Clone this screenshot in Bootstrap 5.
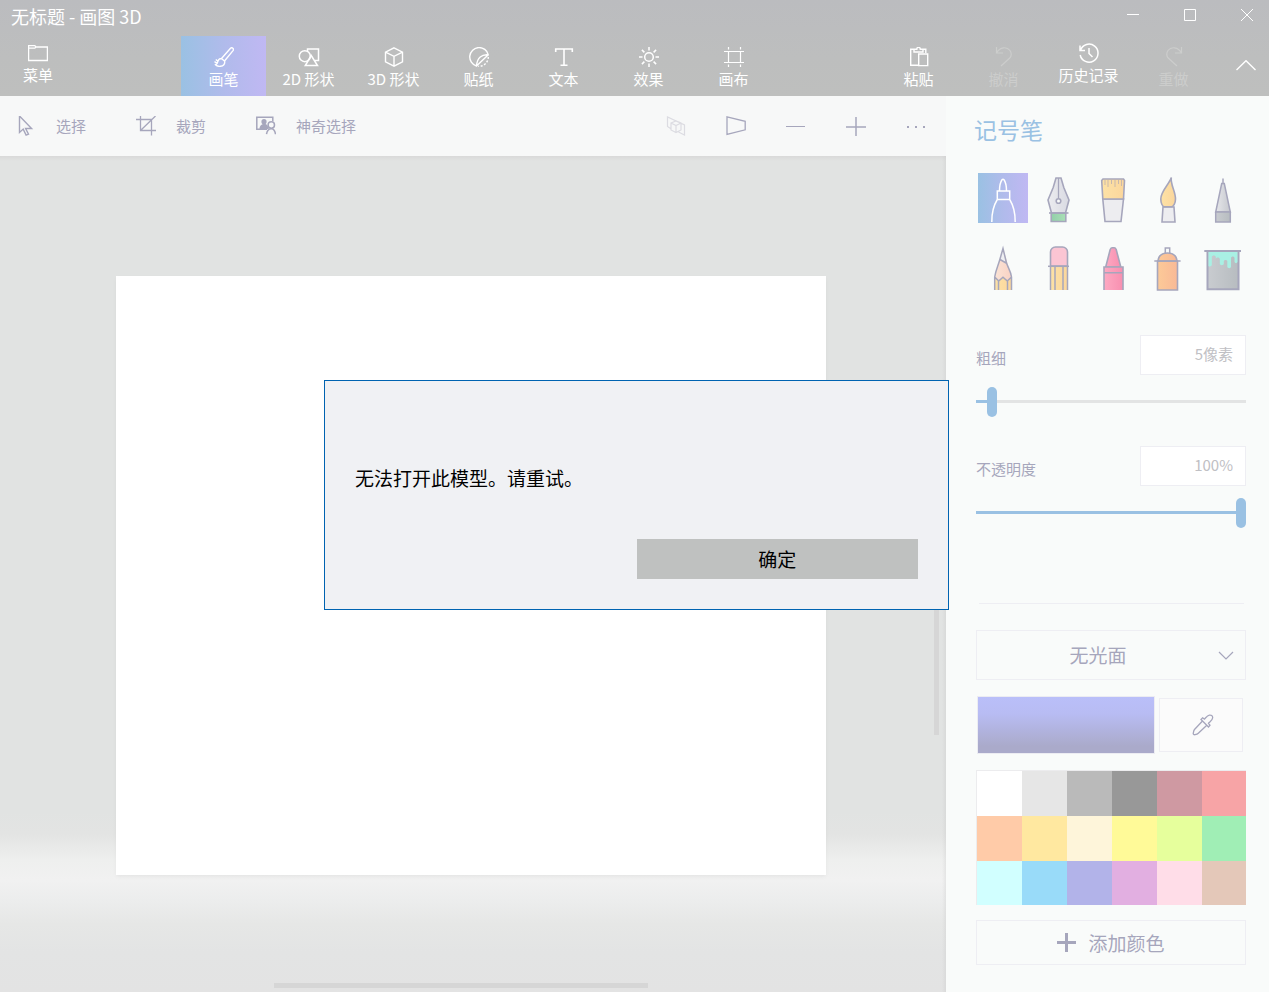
<!DOCTYPE html>
<html lang="zh-CN">
<head>
<meta charset="utf-8">
<meta name="viewport" content="width=device-width, initial-scale=1">
<title>无标题 - 画图 3D</title>
<link href="https://cdn.jsdelivr.net/npm/bootstrap@5.3.0/dist/css/bootstrap.min.css" rel="stylesheet">
<style>
:root { --ink: #a6a6bc; --sky: #9ac1e3; --line: #eeeef3; --pane: #f9fbfa; }
body { font-family: "Noto Sans CJK SC", "Noto Sans", sans-serif; font-size: 15px; line-height: 22px; color: var(--ink); background: var(--pane); }
button, select, input { font-family: inherit; }
svg { display: block; }
svg:not([fill]) { fill: none; }
.plain { border: 0; background: none; padding: 0; color: inherit; }
.app-head { background: linear-gradient(#bbbcbf, #bdbebe 60%, #bebfbe); color: #fff; }
.title-row { height: 36px; }
.app-title { font-size: 18px; line-height: 32px; padding-left: 11px; font-weight: 400; }
.win-btns { gap: 13px; }
.win-btns button { width: 44px; height: 30px; }
.ribbon { height: 60px; }
.ribbon-btn { width: 85px; height: 60px; padding-top: 11px; gap: 1px; white-space: nowrap; }
.ribbon-btn.raised { padding-top: 7px; }
.menu-btn { width: 76px; margin-right: 105px; }
.fold-btn { width: 53px; padding-right: 13px; }
.ribbon-btn:disabled { color: #cccdcc; }
.on { background: linear-gradient(90deg, #9ac1e3, #b0bbeb 50%, #c0b8f3); color: #fff; }
.tool-row { height: 60px; background: #f7f8f8; }
.tool-row .pick { padding: 0 16px; gap: 20px; height: 60px; }
.tool-row .picks { gap: 18px; }
.tool-row .view { width: 60px; height: 60px; }
.view:disabled { color: #dcdce2; }
.stage { padding: 120px 120px 117px 116px;
  background: linear-gradient(90deg, transparent calc(100% - 4px), rgba(190,190,190,.25)),
   linear-gradient(#d9d9d9, transparent 5px),
   linear-gradient(0deg, #e3e3e3, #e3e4e4 40px, #e6e7e6 68px, #eceded 92px, #f1f1f1 112px, #eeefee 132px, #e3e4e3 158px, #e1e3e2 180px); }
.sheet { background: #fff; box-shadow: 0 2px 4px -1px rgba(120,120,120,.12); }
.bar-h, .bar-v { position: absolute; background: #d6d6d6; }
.bar-h { left: 29%; width: 39.5%; height: 5px; bottom: 4px; }
.bar-v { right: 7px; width: 5px; top: 30%; bottom: 257px; }
.side { width: 323px; padding: 15px 23px 27px 30px; background: var(--pane); }
.side h2 { font-size: 23px; line-height: 36px; color: var(--sky); margin: 0 0 26px -2px; font-weight: 400; }
.brushes { display: grid; grid-template-columns: repeat(5, 50px); gap: 18px 5px; margin: 0 -4px 44px 2px; }
.brushes button { width: 50px; height: 50px; }
.brushes svg { stroke: var(--ink); stroke-width: 2; }
.brushes .on svg { stroke: #fff; }
.amount { width: 106px; height: 40px; border: 1px solid var(--line); background: #fff; text-align: right; padding: 0 12px 3px; color: #c0c0c4; border-radius: 0; }
.field-name { margin-bottom: 6px; }
.dial { appearance: none; display: block; width: 100%; height: 30px; margin: 12px 0 29px; background: linear-gradient(90deg, var(--sky) var(--fill), #e3e4e4 var(--fill)) 0 13px / 100% 3px no-repeat; }
.dial::-webkit-slider-thumb { appearance: none; width: 10px; height: 30px; border-radius: 5px; background: var(--sky); }
.dial::-moz-range-thumb { border: 0; width: 10px; height: 30px; border-radius: 5px; background: var(--sky); }
.rule { height: 1px; background: var(--line); margin: 75px 2px 26px 3px; }
.finish { height: 50px; width: 100%; border: 1px solid var(--line); border-radius: 0; font-size: 19px; color: var(--ink); text-align-last: center; appearance: none; padding: 0 26px 0 0;
  background: url("data:image/svg+xml,%3Csvg xmlns='http://www.w3.org/2000/svg' width='16' height='12' fill='none' stroke='%23a6a6bc' stroke-width='1.2'%3E%3Cpath d='M1 3l7 7 7-7'/%3E%3C/svg%3E") right 11px center no-repeat; }
.current { margin: 16px 3px 16px 1px; gap: 4px; }
.current-color { height: 58px; border: 1px solid #ececf2; background: linear-gradient(#babff9, #b8bcf3 30%, #aaaaca 88%); }
.dropper { width: 84px; height: 54px; border: 1px solid var(--line); background: #fbfbfb; }
.palette { display: grid; grid-template-columns: repeat(5, 45px) 1fr; border: solid #ececee; border-width: 1px 0 0 1px; }
.palette button { height: 45px; }
.palette button:nth-child(n+13) { height: 44px; }
.add-color { height: 45px; border: 1px solid var(--line); margin-top: 15px; font-size: 19px; gap: 12px; }
.veil { position: fixed; inset: 0; z-index: 10; padding: 0 0 2px 4px; }
.notice { width: 625px; border: 1px solid #0063b1; background: #f0f1f4; color: #000; padding: 83px 30px 30px; font-size: 19px; }
.notice p { line-height: 28px; margin: 0 0 47px; }
.notice button { width: 50%; height: 40px; background: #bfc1c0; }
</style>
</head>
<body>
<div class="d-flex flex-column min-vh-100">
<header class="app-head">
  <div class="title-row d-flex justify-content-between">
    <h1 class="app-title m-0">无标题 - 画图 3D</h1>
    <div class="win-btns d-flex">
      <button class="plain d-flex align-items-center justify-content-center" aria-label="最小化"><svg width="12" height="12" stroke="currentColor"><path d="M0 5.5h12"/></svg></button>
      <button class="plain d-flex align-items-center justify-content-center" aria-label="最大化"><svg width="12" height="12" stroke="currentColor"><path d="M.5.5h11v11H.5z"/></svg></button>
      <button class="plain d-flex align-items-center justify-content-center" aria-label="关闭"><svg width="12" height="12" stroke="currentColor"><path d="M0 0l12 12M12 0L0 12"/></svg></button>
    </div>
  </div>
  <nav class="ribbon d-flex" aria-label="主菜单">
    <button class="plain ribbon-btn raised menu-btn d-flex flex-column align-items-center"><svg width="20" height="20" stroke="currentColor" stroke-width="1.3"><path d="M.6 2.6h6.2l1.2 1.4h11.400v13.500H.6zM.6 5.200h6.200L8 4"/></svg><span>菜单</span></button>
    <div class="d-flex">
      <button class="plain ribbon-btn on d-flex flex-column align-items-center"><svg width="20" height="20" stroke="currentColor" stroke-width="1.4"><path d="M7.500 11.500L16.500 1.300c1.600-1.500 3.800.5 2.500 2.300L10.500 14M7.500 11.500l3.200 2.800M7.500 11.500c-2 .1-3.200 1-3.500 2.700-.3 2-1.200 2.800-2.500 3.500 1.200 1.300 3 1.800 5 1.600 3-.3 4.500-2.200 4.200-5M3.500 16.500L.5 14.700M3.800 14.300l-2-1.800"/></svg><span>画笔</span></button>
      <button class="plain ribbon-btn d-flex flex-column align-items-center"><svg width="22" height="20" stroke="currentColor" stroke-width="1.5"><path d="M9.500 5V2h11v11.500h-3.500"/><circle cx="6.800" cy="9.200" r="5.500"/><path d="M13.200 8.500L19.500 18.500H7.300z"/></svg><span>2D 形状</span></button>
      <button class="plain ribbon-btn d-flex flex-column align-items-center"><svg width="20" height="20" stroke="currentColor" stroke-width="1.4"><path d="M10 .9l8.500 4.200v9.800L10 19.100l-8.500-4.200V5.100zM1.500 5.100L10 9.300l8.500-4.200M10 9.300v9.800"/></svg><span>3D 形状</span></button>
      <button class="plain ribbon-btn d-flex flex-column align-items-center"><svg width="20" height="20" stroke="currentColor" stroke-width="1.4"><path d="M7.500 19A9.400 9.400 0 1 1 19.300 7.800C13 7 8 11 7.500 19zM19.300 7.800L7.500 19"/><path d="M19.300 10a9.400 9.400 0 0 1-10 9.300" stroke-dasharray="2 1.600"/></svg><span>贴纸</span></button>
      <button class="plain ribbon-btn d-flex flex-column align-items-center"><svg width="20" height="20" stroke="currentColor" stroke-width="1.6"><path d="M1.700 5V2h16.600v3M10 2v16.300M6.500 18.300h7"/></svg><span>文本</span></button>
      <button class="plain ribbon-btn d-flex flex-column align-items-center"><svg width="20" height="20" stroke="currentColor" stroke-width="1.5"><circle cx="10" cy="10" r="4.300"/><path d="M10 0v3.500M10 16.500V20M0 10h3.500M16.500 10H20M2.900 2.900l2.500 2.500M14.600 14.600l2.500 2.500M17.100 2.900l-2.500 2.500M5.400 14.600l-2.500 2.500"/></svg><span>效果</span></button>
      <button class="plain ribbon-btn d-flex flex-column align-items-center"><svg width="20" height="20" stroke="currentColor" stroke-width="1.2"><path d="M4.500 0v2.500M4.500 4v12M4.500 17.500V20M16.500 0v2.500M16.500 4v12M16.500 17.500V20M0 4.500h20M0 15.500h20"/></svg><span>画布</span></button>
    </div>
    <div class="d-flex ms-auto">
      <button class="plain ribbon-btn d-flex flex-column align-items-center"><svg width="20" height="20" stroke="currentColor" stroke-width="1.4"><path d="M9 18.300H1.700V2.200h3.800M13 2.200h3.800V6M5 5V2.200h2.800c0-2.400 3.500-2.400 3.500 0H14V5z"/><path d="M9.700 7h9v11.600h-9z"/></svg><span>粘贴</span></button>
      <button class="plain ribbon-btn d-flex flex-column align-items-center" disabled><svg width="20" height="20" stroke="currentColor" stroke-width="1.2"><path d="M2.500 0v6H9M2.500 6C6-.5 13-.5 16 3.500c2 3 1.500 5.500-.5 7.800L7 19"/></svg><span>撤消</span></button>
      <button class="plain ribbon-btn raised d-flex flex-column align-items-center"><svg width="20" height="20" stroke="currentColor" stroke-width="1.5"><path d="M1 2.500v5h5M1.500 7.200A9 9 0 1 1 1.200 12M10 5v5.500l3.500 3.500"/></svg><span>历史记录</span></button>
      <button class="plain ribbon-btn d-flex flex-column align-items-center" disabled><svg width="20" height="20" stroke="currentColor" stroke-width="1.2"><path d="M17.500 0v6H11M17.500 6C14-.5 7-.5 4 3.500c-2 3-1.500 5.500.5 7.800L13 19"/></svg><span>重做</span></button>
      <button class="plain fold-btn d-flex align-items-center justify-content-end" aria-label="折叠"><svg width="20" height="12" stroke="currentColor" stroke-width="1.4"><path d="M.5 10L10 .7l9.500 9.300"/></svg></button>
    </div>
  </nav>
</header>
<div class="d-flex flex-grow-1">
  <main class="d-flex flex-column flex-grow-1">
    <div class="tool-row d-flex justify-content-between">
      <div class="picks d-flex">
        <button class="plain pick d-flex align-items-center"><svg width="20" height="20" stroke="currentColor" stroke-width="1.4"><path d="M3.500 0v16.500l3.700-3.400 2.900 6 2.400-1-2.900-5.600h6z"/></svg><span>选择</span></button>
        <button class="plain pick d-flex align-items-center"><svg width="20" height="20" stroke="currentColor" stroke-width="1.3"><path d="M0 3.500h15.500V19.500M4.500 0v14.500H20M4.500 14.500L19.500 0"/></svg><span>裁剪</span></button>
        <button class="plain pick d-flex align-items-center"><svg width="20" height="20" stroke="currentColor" stroke-width="1.5"><path d="M11 13.300H.8V1.200h16v4"/><circle cx="8" cy="5.700" r="2.600" fill="currentColor" stroke="none"/><path d="M3.500 13c0-3.500 2-5 5-5 1.500 0 2.500.5 3 1.500L13 13z" fill="currentColor" stroke="none"/><circle cx="15.300" cy="9" r="3.200"/><path d="M10.500 18.200c.5-3.500 2-5.500 4.800-5.500s3.700 2 4.200 5.500"/></svg><span>神奇选择</span></button>
      </div>
      <div class="d-flex">
        <button class="plain view d-flex align-items-center justify-content-center" disabled aria-label="混合视图"><svg width="20" height="20" stroke="currentColor" stroke-width="1.2"><path d="M4.500 12.500L1.500 10.500V1l17 8v10l-6-3M5 7l5-2 5 2v7l-5 2.500L5 14zM5 7l5 2.500L15 7M10 9.500v7"/></svg></button>
        <button class="plain view d-flex align-items-center justify-content-center" aria-label="三维视图"><svg width="20" height="20" stroke="currentColor" stroke-width="1.3"><path d="M1 .8l18.200 4.500v8.500L1 18.500z"/></svg></button>
        <button class="plain view d-flex align-items-center justify-content-center" aria-label="缩小"><svg width="20" height="20" stroke="currentColor"><path d="M0 10.500h19"/></svg></button>
        <button class="plain view d-flex align-items-center justify-content-center" aria-label="放大"><svg width="20" height="20" stroke="currentColor" stroke-width="1.500"><path d="M0 11h20M10 1v19"/></svg></button>
        <button class="plain view d-flex align-items-center justify-content-center" aria-label="更多"><svg width="20" height="20" fill="currentColor"><path d="M1 10h2v2H1zM9 10h2v2H9zM17 10h2v2h-2z"/></svg></button>
      </div>
    </div>
    <div class="stage position-relative d-flex flex-grow-1">
      <div class="sheet flex-grow-1"></div>
      <div class="bar-v"></div>
      <div class="bar-h"></div>
    </div>
  </main>
  <aside class="side flex-shrink-0">
    <h2>记号笔</h2>
    <svg width="0" height="0" class="position-absolute" aria-hidden="true"><defs>
      <linearGradient id="steel"><stop stop-color="#ececf0"/><stop offset="1" stop-color="#d9dae2"/></linearGradient>
      <linearGradient id="grey"><stop stop-color="#c9ccd0"/><stop offset="1" stop-color="#b7bcc0"/></linearGradient>
      <linearGradient id="cone"><stop stop-color="#e6e7ea"/><stop offset="1" stop-color="#c6c8ce"/></linearGradient>
      <linearGradient id="gold"><stop stop-color="#fde2a6"/><stop offset="1" stop-color="#fbd69c"/></linearGradient>
      <linearGradient id="green"><stop stop-color="#93cfaa"/><stop offset="1" stop-color="#a9dfb5"/></linearGradient>
      <linearGradient id="skin"><stop stop-color="#fbe4d6"/><stop offset="1" stop-color="#f8d2c4"/></linearGradient>
      <linearGradient id="rose"><stop stop-color="#fda9c2"/><stop offset="1" stop-color="#f88fb0"/></linearGradient>
      <linearGradient id="rust"><stop stop-color="#fcca98"/><stop offset="1" stop-color="#f9b996"/></linearGradient>
    </defs></svg>
    <div class="brushes">
      <button class="plain on" aria-label="记号笔"><svg width="50" height="50"><path stroke-width="1.5" d="M21.500 18c0-5 1.300-9.500 2.500-11.200q1-1 2 0c1.200 1.700 2.500 6.200 2.500 11.200M19.300 18h12.400v8.500H19.300zM13.800 49c-.1-9 1.500-16 5.500-22.500M37.200 49c.1-9-1.500-16-5.500-22.500"/></svg></button>
      <button class="plain" aria-label="书法笔"><svg width="50" height="50"><path fill="url(#green)" stroke-width="1.6" d="M18.200 40h14.600v8.500H18.200z"/><path fill="url(#steel)" stroke-width="1.6" d="M23 5h5l2.800 9.500 5.200 12.500-3.500 13h-14l-3.500-13 5.200-12.500z"/><path stroke-width="1.6" d="M16 40h19.500"/><path stroke-width="1.3" d="M25.500 5v20"/><circle cx="25.500" cy="28" r="2.300" fill="#f9fbfa" stroke-width="1.600"/></svg></button>
      <button class="plain" aria-label="油画笔"><svg width="50" height="50"><path fill="#ededf0" stroke-width="1.6" d="M14.800 26h20.700l-2.500 22.500H17z"/><path fill="url(#gold)" stroke-width="1.6" d="M15 6h20.500l1 1.500-1 18.500H14.800L13.700 7.500z"/><path stroke-width="1" stroke="#c9b8ac" d="M17 7v5M20 7v7M23.500 7v4M27 7v7M30.500 7v4M33.500 7v6"/></svg></button>
      <button class="plain" aria-label="水彩"><svg width="50" height="50"><path fill="#ededf0" stroke-width="1.6" d="M20 34h11l1 15H19z"/><path fill="url(#gold)" stroke-width="1.6" d="M28.300 4.500c-1 7.500 4.200 13.500 4.200 21.500 0 4-2 7.800-4 7.800h-7c-2 0-3.700-3.500-3.700-7.800 0-8 8-14 10.500-21.500z"/></svg></button>
      <button class="plain" aria-label="像素笔"><svg width="50" height="50"><path stroke-width="1.5" d="M25 5.500V11"/><path fill="url(#cone)" stroke-width="1.5" d="M23.700 10.500h2.600L32.300 39H17.700z"/><path fill="url(#grey)" stroke-width="1.5" d="M17.700 39h14.600v10H17.700z"/></svg></button>
      <button class="plain" aria-label="铅笔"><svg width="50" height="50"><path fill="url(#skin)" stroke="none" d="M25 7l-8.500 29v4h17v-4z"/><path fill="#f0f0f3" stroke="none" d="M25 7l-3.500 11.500 7 4z"/><path fill="url(#gold)" stroke="none" d="M16.700 36l4 4 4.300-4 4.300 4 4.200-4v13H16.700z"/><path stroke-width="1.5" d="M16.700 49V36c1-7 3.300-11 5-17L25 7.500 28.500 22c1.700 5 4.200 8 5 14v13M22 18.500l7 4M16.700 36l4 4 4.300-3.700 4.300 3.700 4.200-4M20.500 40v9M29.500 40v9"/></svg></button>
      <button class="plain" aria-label="橡皮擦"><svg width="50" height="50"><path fill="url(#gold)" stroke="none" d="M17.500 25h17v24h-17z"/><path stroke-width="1.5" d="M17.500 49V25M34.500 49V25M22 49V25M30 49V25"/><path fill="#fbc5d3" stroke-width="1.6" d="M17.500 25V11a5 5 0 0 1 5-5h7a5 5 0 0 1 5 5v14z"/><path stroke-width="1.5" d="M15 25.300h21"/></svg></button>
      <button class="plain" aria-label="蜡笔"><svg width="50" height="50"><path fill="url(#rose)" stroke-width="1.6" d="M17.700 26l4.500-17.500q.8-1.800 2-1.800h2q1.200 0 2 1.800L32.800 26z"/><path fill="url(#rose)" stroke="none" d="M16 26h19v23H16z"/><path stroke-width="1.6" d="M16 49V26h19v23M16 31.700h19"/></svg></button>
      <button class="plain" aria-label="喷雾罐"><svg width="50" height="50"><path fill="url(#rust)" stroke-width="1.6" d="M14.500 20h20v29h-20z"/><path fill="url(#rust)" stroke-width="1.6" d="M15 20c.5-5 4-8 9.500-8s9 3 9.500 8z"/><path stroke-width="1.5" d="M22.300 12V7h4.400v5M11.300 20h26.300"/></svg></button>
      <button class="plain" aria-label="填充"><svg width="50" height="50"><path fill="url(#grey)" d="M9.500 10h31v38.300h-31z"/><path fill="#a9f0e4" stroke="none" d="M10.500 11h29v10c-.5 1.500-2.500 1.500-3 0v-4c-.5-2-3-2-3.500 0v9c-.5 1.500-3.200 1.500-3.700 0v-6c-.5-1.500-3-1.500-3.500 0v3c-.5 1.500-3.500 1.500-4 0v-5c-.5-2-3.500-2-4 0v-2c-.5-2-3.500-2-4 0v8c-.5 1.500-2.800 2-3.300 1z"/><path d="M6.300 10H43"/></svg></button>
    </div>
    <div class="d-flex justify-content-between align-items-end"><label class="field-name" for="w">粗细</label><input id="w" class="amount" type="text" value="5像素"></div>
    <input class="dial" type="range" min="1" max="100" value="5" aria-label="粗细" style="--fill:6%">
    <div class="d-flex justify-content-between align-items-end"><label class="field-name" for="o">不透明度</label><input id="o" class="amount" type="text" value="100%"></div>
    <input class="dial" type="range" min="0" max="100" value="100" aria-label="不透明度" style="--fill:100%">
    <div class="rule"></div>
    <select class="finish d-block" aria-label="材质"><option>无光面</option></select>
    <div class="current d-flex align-items-center">
      <button class="current-color flex-grow-1 p-0" aria-label="当前颜色"></button>
      <button class="plain dropper d-flex align-items-center justify-content-center ps-1" aria-label="取色器"><svg width="22" height="22" stroke="currentColor" stroke-width="1.3"><path d="M10 7.500l-7.500 8c-1 1.200-1 3-1.300 4.200.2.800.8 1.200 1.500 1 1.300-.3 2.600-.5 3.600-1.500l8-7.500M9 5.500l7.500 7.500 1.500-1.700-1.500-2c1.500-1.500 4-3 4.200-5.500 0-2-1.500-3-3.300-2.700-2.200.4-3.500 2.500-5 4l-1.800-1.300z"/></svg></button>
    </div>
    <div class="palette">
      <button class="plain" aria-label="白色" style="background:#fff"></button><button class="plain" aria-label="浅灰" style="background:#e6e6e6"></button><button class="plain" aria-label="灰色" style="background:#bababa"></button><button class="plain" aria-label="深灰" style="background:#989898"></button><button class="plain" aria-label="深红" style="background:#cf99a2"></button><button class="plain" aria-label="红色" style="background:#f7a4a6"></button>
      <button class="plain" aria-label="橙色" style="background:#ffcba8"></button><button class="plain" aria-label="金色" style="background:#ffe8a0"></button><button class="plain" aria-label="米色" style="background:#fef5da"></button><button class="plain" aria-label="黄色" style="background:#fffa98"></button><button class="plain" aria-label="酸橙色" style="background:#e6ff9c"></button><button class="plain" aria-label="绿色" style="background:#a0eeb5"></button>
      <button class="plain" aria-label="青色" style="background:#d1ffff"></button><button class="plain" aria-label="天蓝" style="background:#99dbf9"></button><button class="plain" aria-label="靛蓝" style="background:#b2b3e9"></button><button class="plain" aria-label="紫色" style="background:#e2afe1"></button><button class="plain" aria-label="粉色" style="background:#ffdde8"></button><button class="plain" aria-label="棕色" style="background:#e4c8b9"></button>
    </div>
    <button class="plain add-color w-100 d-flex align-items-center justify-content-center"><svg width="19" height="19" stroke="currentColor" stroke-width="3"><path d="M0 9.500h19M9.500 0v19"/></svg><span>添加颜色</span></button>
  </aside>
</div>
</div>
<div class="veil d-flex align-items-center justify-content-center">
  <div class="notice" role="alertdialog" aria-modal="true" aria-labelledby="msg">
    <p id="msg">无法打开此模型。请重试。</p>
    <button class="plain d-block ms-auto" id="ok">确定</button>
  </div>
</div>
<script src="https://cdn.jsdelivr.net/npm/bootstrap@5.3.0/dist/js/bootstrap.bundle.min.js"></script>
</body>
</html>
